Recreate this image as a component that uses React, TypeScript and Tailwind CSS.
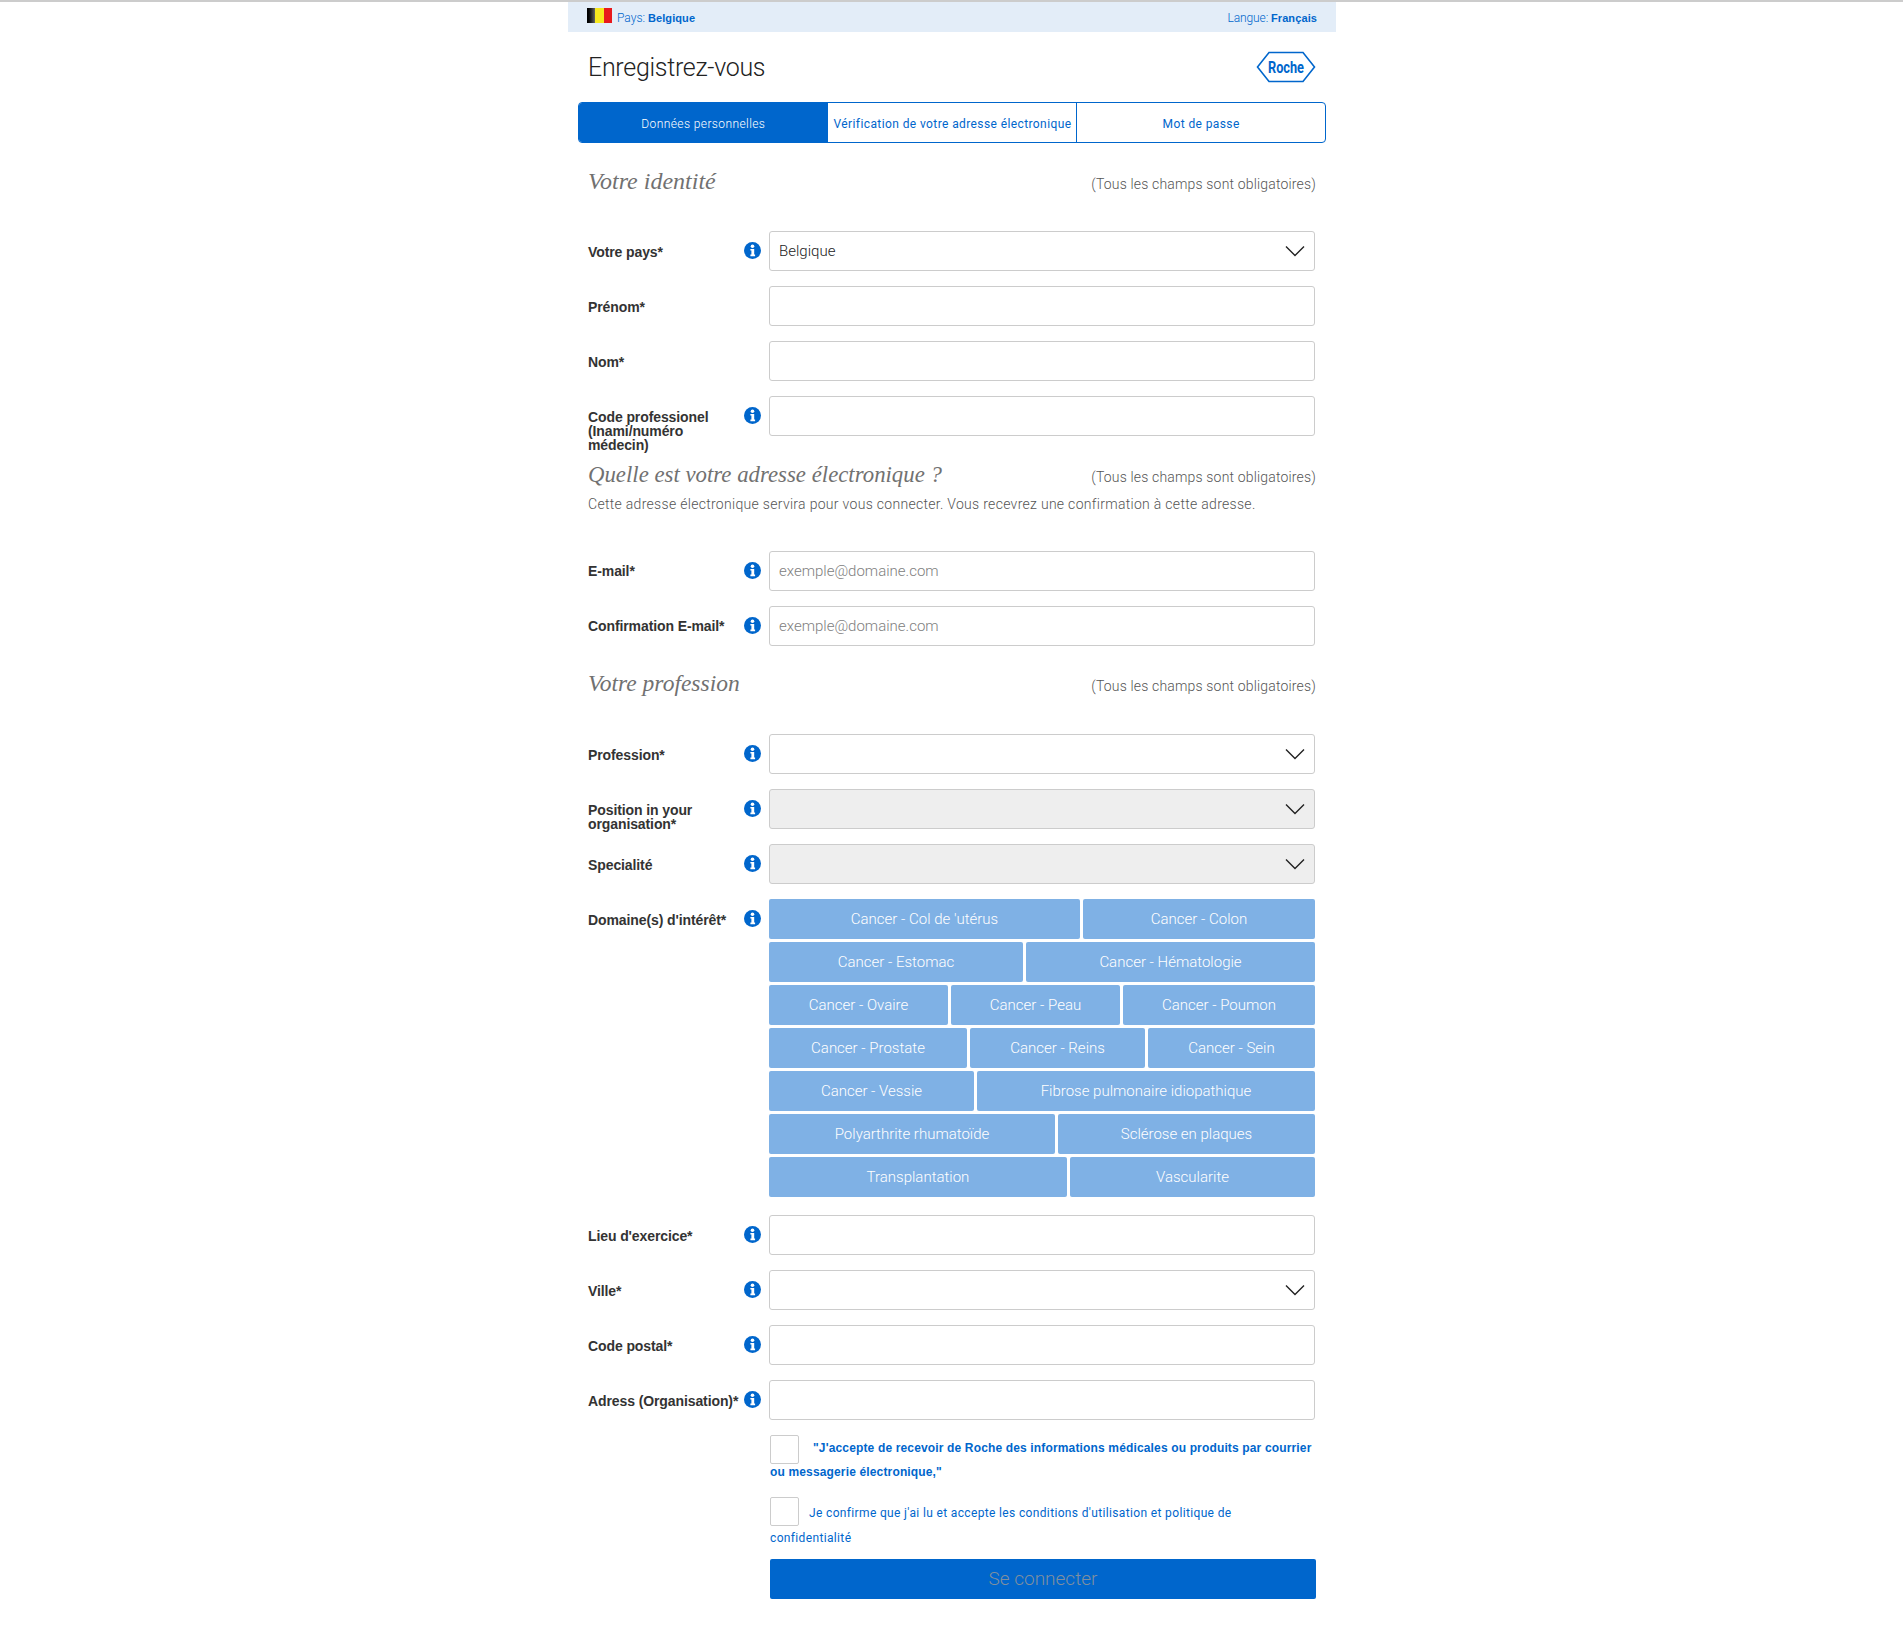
const domains = [
  [{ label: "Cancer - Col de 'utérus", w: 'w-[311px]' }, { label: 'Cancer - Colon', w: 'w-[232px]' }],
  [{ label: 'Cancer - Estomac', w: 'w-[254px]' }, { label: 'Cancer - Hématologie', w: 'w-[289px]' }],
  [{ label: 'Cancer - Ovaire', w: 'w-[179px]' }, { label: 'Cancer - Peau', w: 'w-[169px]' }, { label: 'Cancer - Poumon', w: 'w-[192px]' }],
  [{ label: 'Cancer - Prostate', w: 'w-[198px]' }, { label: 'Cancer - Reins', w: 'w-[175px]' }, { label: 'Cancer - Sein', w: 'w-[167px]' }],
  [{ label: 'Cancer - Vessie', w: 'w-[205px]' }, { label: 'Fibrose pulmonaire idiopathique', w: 'w-[338px]' }],
  [{ label: 'Polyarthrite rhumatoïde', w: 'w-[286px]' }, { label: 'Sclérose en plaques', w: 'w-[257px]' }],
  [{ label: 'Transplantation', w: 'w-[298px]' }, { label: 'Vascularite', w: 'w-[245px]' }],
];

function InfoIcon() {
  return (
    <svg width="17" height="17" viewBox="0 0 17 17" className="mt-[11px] block">
      <circle cx="8.5" cy="8.5" r="8.5" fill="#0066cc" />
      <circle cx="8.5" cy="4.2" r="1.8" fill="#fff" />
      <path d="M6.4 7h3.8v5.6h.9v1.6H6.4v-1.6h1V8.600h-1z" fill="#fff" />
    </svg>
  );
}

function Chevron() {
  return (
    <svg width="20" height="12" viewBox="0 0 20 12" className="absolute right-[9px] top-[13px] pointer-events-none">
      <polyline points="1,1.5 10,10.5 19,1.5" fill="none" stroke="#222" strokeWidth="1.4" />
    </svg>
  );
}

function Label({ text, top = 'pt-[14px]' }: { text: string; top?: string }) {
  return <label className={`w-[156px] ${top} font-['Liberation_Sans',sans-serif] text-[14px] leading-[14px] tracking-[-0.1px] font-bold text-[#333]`}>{text}</label>;
}

function Row({ label, info, children, top, className = 'mb-[15px]' }: { label: string; info?: boolean; children: React.ReactNode; top?: string; className?: string }) {
  return (
    <div className={`flex h-10 ${className}`}>
      <Label text={label} top={top} />
      <div className="w-[25px] shrink-0">{info && <InfoIcon />}</div>
      {children}
    </div>
  );
}

function TextField({ placeholder }: { placeholder?: string }) {
  return (
    <input
      type="text"
      placeholder={placeholder}
      className="w-[546px] h-10 px-[9px] bg-white border border-[#ccc] rounded-[3px] text-[15px] font-light text-[#333] placeholder:text-[#808080] outline-none"
    />
  );
}

function SelectField({ value, disabled }: { value?: string; disabled?: boolean }) {
  return (
    <div className={`relative w-[546px] h-10 px-[9px] flex items-center border border-[#ccc] rounded-[3px] text-[15px] font-light text-[#222] ${disabled ? 'bg-[#eeeeee]' : 'bg-white'}`}>
      {value}
      <Chevron />
    </div>
  );
}

function SectionHead({ title, className, titleClass, noteTop = 'pt-[3px]' }: { title: string; className: string; titleClass: string; noteTop?: string }) {
  return (
    <div className={`flex items-center justify-between h-[30px] ${className}`}>
      <h2 className={`font-['Liberation_Serif',serif] italic text-[#717171] ${titleClass}`}>{title}</h2>
      <span className={`${noteTop} text-[14px] tracking-[0.17px] font-light text-[#555]`}>(Tous les champs sont obligatoires)</span>
    </div>
  );
}

export default function App() {
  return (
    <div className="h-[1634px] overflow-hidden pl-px bg-white border-t-2 border-[#cccccc] font-['Roboto',sans-serif]">
      <div className="mx-auto w-[768px]">
        <div className="h-[30px] pt-[2px] flex items-center justify-between bg-[#e3edf8] pl-[19px] pr-[19px] text-[12px] text-[#0066cc]">
          <div className="flex items-center">
            <div className="flex w-[25px] h-[15px] mr-[5px] -mt-[6px] blur-[0.4px]">
              <div className="flex-1 bg-gradient-to-r from-black to-[#666]" />
              <div className="flex-1 bg-[#f7e81e]" />
              <div className="flex-1 bg-[#e8191c]" />
            </div>
            <span className="font-light">Pays:&nbsp;</span><b className="font-['Liberation_Sans',sans-serif] text-[11px] tracking-[0.1px] font-bold">Belgique</b>
          </div>
          <div>
            <span className="font-light tracking-[-0.1px]">Langue:&nbsp;</span><b className="font-['Liberation_Sans',sans-serif] text-[11px] tracking-[0.1px] font-bold">Français</b>
          </div>
        </div>

        <div className="h-[70px] flex items-center justify-between pl-[20px] pr-[20px]">
          <h1 className="pt-[1px] text-[25px] font-light text-[#222] tracking-[-0.3px]">Enregistrez-vous</h1>
          <svg width="60" height="32" viewBox="0 0 60 32">
            <polygon points="1.5,16 13,1.5 47,1.5 58.5,16 47,30.5 13,30.5" fill="none" stroke="#0066cc" strokeWidth="1.6" />
            <text x="30" y="21.5" textAnchor="middle" fontSize="17" fontWeight="700" fill="#0066cc" textLength="36" lengthAdjust="spacingAndGlyphs">Roche</text>
          </svg>
        </div>

        <div className="mx-[10px] w-[748px] h-[41px] grid grid-cols-3 border border-[#0066cc] rounded-[4px] overflow-hidden text-[12px] tracking-[0.4px] text-[#0066cc]">
          <div className="pt-[3px] flex items-center justify-center bg-[#0066cc] text-white font-light">Données personnelles</div>
          <div className="pt-[3px] pl-[1px] flex items-center justify-center whitespace-nowrap">Vérification de votre adresse électronique</div>
          <div className="pt-[3px] flex items-center justify-center border-l border-[#0066cc]">Mot de passe</div>
        </div>

        <div className="pl-[20px] pr-[20px] w-[768px]">
          <SectionHead title="Votre identité" className="mt-[23px] mb-[35px]" titleClass="text-[24px]" noteTop="pt-[6px]" />
          <Row label="Votre pays*" info><SelectField value="Belgique" /></Row>
          <Row label="Prénom*"><TextField /></Row>
          <Row label="Nom*"><TextField /></Row>
          <Row label="Code professionel (Inami/numéro médecin)" info className="mb-0"><TextField /></Row>

          <SectionHead title="Quelle est votre adresse électronique ?" className="mt-[25px]" titleClass="text-[22.8px] -mt-[2px]" />
          <p className="mt-[3px] mb-[37px] text-[14px] leading-5 tracking-[0.3px] font-light text-[#555]">
            Cette adresse électronique servira pour vous connecter. Vous recevrez une confirmation à cette adresse.
          </p>
          <Row label="E-mail*" info top="pt-[13px]"><TextField placeholder="exemple@domaine.com" /></Row>
          <Row label="Confirmation E-mail*" info top="pt-[13px]" className="mb-0"><TextField placeholder="exemple@domaine.com" /></Row>

          <SectionHead title="Votre profession" className="mt-[24px] mb-[34px]" titleClass="text-[23.5px] -mt-[2px]" />
          <Row label="Profession*" info><SelectField /></Row>
          <Row label="Position in your organisation*" info><SelectField disabled /></Row>
          <Row label="Specialité" info><SelectField disabled /></Row>

          <div className="flex mb-[18px]">
            <Label text="Domaine(s) d'intérêt*" />
            <div className="w-[25px] shrink-0"><InfoIcon /></div>
            <div className="w-[546px] flex flex-col gap-[3px]">
              {domains.map((row, i) => (
                <div key={i} className="flex gap-[3px]">
                  {row.map((d) => (
                    <button key={d.label} type="button" className={`${d.w} h-10 bg-[#7fb1e5] rounded-[2px] text-[15px] font-light text-white`}>
                      {d.label}
                    </button>
                  ))}
                </div>
              ))}
            </div>
          </div>

          <Row label="Lieu d'exercice*" info><TextField /></Row>
          <Row label="Ville*" info><SelectField /></Row>
          <Row label="Code postal*" info><TextField /></Row>
          <Row label="Adress (Organisation)*" info><TextField /></Row>

          <div className="ml-[181px] pl-[1px] w-[547px]">
            <p className="h-[62px] font-['Liberation_Sans',sans-serif] text-[12px] leading-[16px] tracking-[0.15px] font-bold text-[#0066cc]">
              <input type="checkbox" className="appearance-none inline-block align-[-12.5px] w-[29px] h-[29px] mr-[14px] bg-white border border-[#ccc] rounded-[2px]" />
              "J'accepte de recevoir de Roche des informations médicales ou produits par courrier ou messagerie électronique,"
            </p>
            <p className="h-[62px] pr-[8px] text-[12px] leading-[24px] tracking-[0.35px] text-[#0066cc]">
              <input type="checkbox" className="appearance-none inline-block align-[-9px] w-[29px] h-[29px] mr-[10px] bg-white border border-[#ccc] rounded-[2px]" />
              Je confirme que j'ai lu et accepte les conditions d'utilisation et politique de confidentialité
            </p>
            <button type="button" className="block w-[546px] h-10 bg-[#0066cc] rounded-[2px] text-[19px] font-light text-[#7f8f9f]">Se connecter</button>
          </div>
        </div>
      </div>
    </div>
  );
}
